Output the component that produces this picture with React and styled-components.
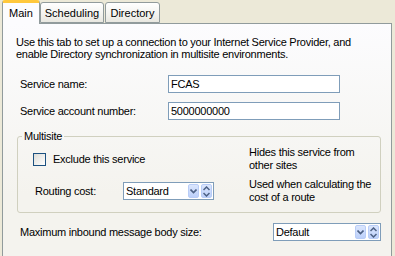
import React from "react";
import styled, { createGlobalStyle } from "styled-components";

const Global = createGlobalStyle`
  html, body { margin: 0; padding: 0; }
  body {
    background: #ece9d8;
    font-family: "Liberation Sans", Arial, sans-serif;
    font-size: 11px;
    letter-spacing: -0.25px;
    color: #000;
    overflow: hidden;
  }
`;

const Dialog = styled.div`
  width: 395px;
  height: 256px;
  box-sizing: border-box;
  padding: 0 3px 0 2px;
  overflow: hidden;
`;

const TabBar = styled.div`
  display: flex;
  align-items: flex-end;
  height: 23px;
  position: relative;
  z-index: 2;
`;

const Tab = styled.div`
  box-sizing: border-box;
  width: ${(p) => p.$w}px;
  margin-right: ${(p) => p.$gap || 0}px;
  height: ${(p) => (p.$active ? 24 : 21)}px;
  margin-bottom: ${(p) => (p.$active ? -1 : 0)}px;
  border: 1px solid #919b9c;
  border-bottom: ${(p) => (p.$active ? "none" : "1px solid #919b9c")};
  border-top: ${(p) => (p.$active ? "3px solid #ffc83c" : "1px solid #919b9c")};
  border-radius: 3px 3px 0 0;
  background: ${(p) =>
    p.$active ? "#fcfcfe" : "linear-gradient(#ffffff, #f3f3ef 60%, #e8e7e0)"};
  display: flex;
  align-items: center;
  justify-content: center;
  padding-bottom: ${(p) => (p.$active ? 2 : 0)}px;
  letter-spacing: 0;
`;

const Panel = styled.div`
  height: 245px;
  box-sizing: border-box;
  border: 1px solid #919b9c;
  background: linear-gradient(#fcfcfe, #f4f3ee 70%);
  padding: 12px 0 0 13px;
  display: flex;
  flex-direction: column;
`;

const Intro = styled.p`
  margin: 0;
  line-height: 12px;
`;

const FieldRow = styled.div`
  display: flex;
  align-items: center;
  height: 18px;
  margin-top: ${(p) => p.$top}px;
  padding-left: 4px;
`;

const Label = styled.label`
  width: ${(p) => p.$w}px;
  flex-shrink: 0;
`;

const TextBox = styled.div`
  box-sizing: border-box;
  width: 172px;
  height: 18px;
  border: 1px solid #7f9db9;
  background: #fff;
  padding-left: 2px;
  display: flex;
  align-items: center;
`;

const Group = styled.fieldset`
  box-sizing: border-box;
  width: 364px;
  margin: 10px 0 0 1px;
  padding: 0 0 8px 15px;
  border: 1px solid #d0d0bf;
  border-radius: 3px;
  min-width: 0;
`;

const Legend = styled.legend`
  margin-left: -11px;
  padding: 0 2px;
  line-height: 13px;
`;

const GroupGrid = styled.div`
  display: grid;
  grid-template-columns: 216px 1fr;
  row-gap: 6px;
  margin-top: 3px;
  align-items: center;
`;

const Help = styled.div`
  line-height: 13px;
`;

const CheckRow = styled.div`
  display: flex;
  align-items: center;
  gap: 7px;
`;

const CheckBox = styled.span`
  box-sizing: border-box;
  width: 13px;
  height: 13px;
  border: 1px solid #1c5180;
  background: linear-gradient(135deg, #dcdcd7, #ffffff);
`;

const SelectRow = styled.div`
  display: flex;
  align-items: center;
  padding-left: 2px;
`;

const Combo = styled.div`
  box-sizing: border-box;
  width: ${(p) => p.$w}px;
  height: 18px;
  border: 1px solid #7f9db9;
  background: #fff;
  display: flex;
  align-items: center;
  padding: 1px 1px 1px 2px;
`;

const ComboText = styled.span`
  flex: 1;
`;

const Btn = styled.span`
  box-sizing: border-box;
  width: 11px;
  height: 14px;
  margin-left: ${(p) => p.$ml || 0}px;
  border: 1px solid #b9cdf7;
  border-radius: 2px;
  background: linear-gradient(#dbe6fd, #bcd0fa);
  display: flex;
  align-items: center;
  justify-content: center;
`;

const BottomRow = styled(FieldRow)`
  justify-content: space-between;
  width: 365px;
  box-sizing: border-box;
`;

const DropBtn = () => (
  <Btn>
    <svg width="7" height="5" viewBox="0 0 7 5">
      <path d="M0.5 0.5 L3.5 3.5 L6.5 0.5" fill="none" stroke="#4d6185" strokeWidth="1.6" />
    </svg>
  </Btn>
);

const SpinBtn = () => (
  <Btn $ml={2}>
    <svg width="7" height="11" viewBox="0 0 7 11">
      <path d="M0.5 4 L3.5 1 L6.5 4" fill="none" stroke="#4d6185" strokeWidth="1.5" />
      <path d="M0.5 7 L3.5 10 L6.5 7" fill="none" stroke="#4d6185" strokeWidth="1.5" />
    </svg>
  </Btn>
);

const Select = ({ value, w }) => (
  <Combo $w={w}>
    <ComboText>{value}</ComboText>
    <DropBtn />
    <SpinBtn />
  </Combo>
);

export default function App() {
  return (
    <Dialog>
      <Global />
      <TabBar>
        <Tab $active $w={38}>Main</Tab>
        <Tab $w={64} $gap={1}>Scheduling</Tab>
        <Tab $w={55}>Directory</Tab>
      </TabBar>
      <Panel>
        <Intro>
          Use this tab to set up a connection to your Internet Service Provider, and
          <br />
          enable Directory synchronization in multisite environments.
        </Intro>

        <FieldRow $top={15}>
          <Label $w={148}>Service name:</Label>
          <TextBox>FCAS</TextBox>
        </FieldRow>
        <FieldRow $top={9}>
          <Label $w={148}>Service account number:</Label>
          <TextBox>5000000000</TextBox>
        </FieldRow>

        <Group>
          <Legend>Multisite</Legend>
          <GroupGrid>
            <CheckRow>
              <CheckBox />
              <span>Exclude this service</span>
            </CheckRow>
            <Help>
              Hides this service from
              <br />
              other sites
            </Help>
            <SelectRow>
              <Label $w={88}>Routing cost:</Label>
              <Select value="Standard" w={91} />
            </SelectRow>
            <Help>
              Used when calculating the
              <br />
              cost of a route
            </Help>
          </GroupGrid>
        </Group>

        <BottomRow $top={10}>
          <Label>Maximum inbound message body size:</Label>
          <Select value="Default" w={108} />
        </BottomRow>
      </Panel>
    </Dialog>
  );
}
